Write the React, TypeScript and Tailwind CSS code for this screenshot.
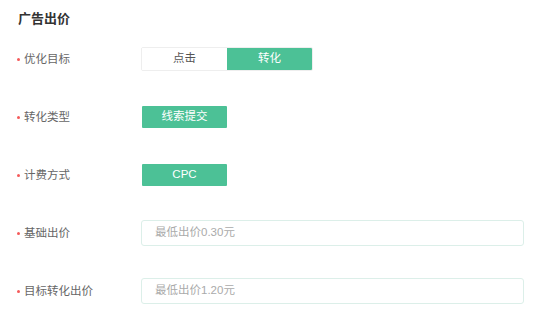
import React from "react";

const font = { fontFamily: '"Liberation Sans", "Noto Sans CJK SC", sans-serif' };

function Label({ text }: { text: string }) {
  return (
    <div className="flex items-center w-[141px] shrink-0 pl-[17px] pt-[1px]">
      <span className="w-[3px] h-[3px] rounded-full bg-[#f55a5a] mr-[4px]" />
      <span className="text-[11.5px] text-[#666]">{text}</span>
    </div>
  );
}

export default function App() {
  return (
    <div className="w-[533px] h-[313px] bg-white overflow-hidden" style={font}>
      <div className="pt-[10px] pl-[18px] text-[13px] font-bold text-[#333] leading-[18px]">广告出价</div>
      <div className="flex flex-col gap-[34px] pt-[19px]">
        <div className="flex items-center h-[24px]">
          <Label text="优化目标" />
          <div className="flex h-[24px] w-[172px] rounded-[2px] border border-[#eeeeee] overflow-hidden">
            <div className="flex-1 flex items-center justify-center text-[11.5px] text-[#555] bg-white">点击</div>
            <div className="flex-1 flex items-center justify-center text-[11.5px] text-white bg-[#4cc196]">转化</div>
          </div>
        </div>
        <div className="flex items-center h-[24px]">
          <Label text="转化类型" />
          <div className="flex items-center justify-center h-[22px] w-[85px] ml-[1px] bg-[#4cc196] text-white text-[11.5px] rounded-[1px]">线索提交</div>
        </div>
        <div className="flex items-center h-[24px]">
          <Label text="计费方式" />
          <div className="flex items-center justify-center h-[22px] w-[85px] ml-[1px] bg-[#4cc196] text-white text-[11.5px] rounded-[1px]">CPC</div>
        </div>
        <div className="flex items-center h-[24px]">
          <Label text="基础出价" />
          <div className="flex items-center h-[26px] w-[383px] border border-[#dcefe9] rounded-[3px] pl-[13px] text-[11.5px] text-[#aaa]">最低出价0.30元</div>
        </div>
        <div className="flex items-center h-[24px]">
          <Label text="目标转化出价" />
          <div className="flex items-center h-[26px] w-[383px] border border-[#dcefe9] rounded-[3px] pl-[13px] text-[11.5px] text-[#aaa]">最低出价1.20元</div>
        </div>
      </div>
    </div>
  );
}
